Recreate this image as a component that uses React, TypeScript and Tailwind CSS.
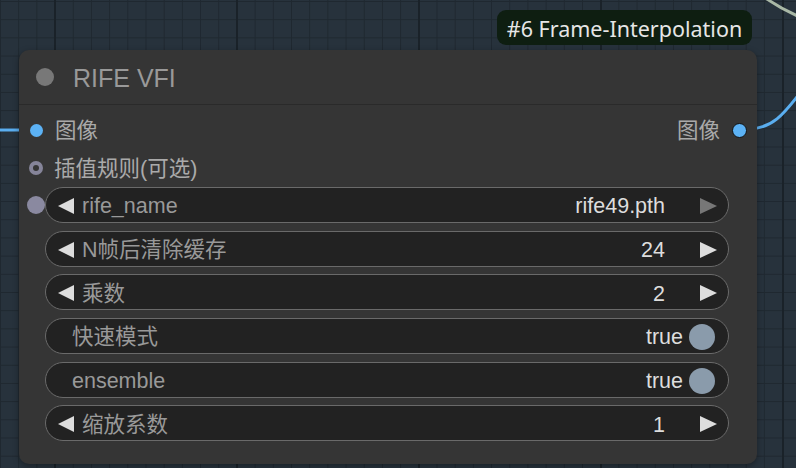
import React from "react";

const LATIN = "font-['Liberation_Sans','Noto_Sans_CJK_SC',sans-serif]";

type Widget =
  | { kind: "combo"; label: string; value: string; dimRight?: boolean; socket?: boolean }
  | { kind: "number"; label: string; value: string }
  | { kind: "toggle"; label: string; value: string };

const widgets: Widget[] = [
  { kind: "combo", label: "rife_name", value: "rife49.pth", dimRight: true, socket: true },
  { kind: "number", label: "N帧后清除缓存", value: "24" },
  { kind: "number", label: "乘数", value: "2" },
  { kind: "toggle", label: "快速模式", value: "true" },
  { kind: "toggle", label: "ensemble", value: "true" },
  { kind: "number", label: "缩放系数", value: "1" },
];

function ArrowLeft({ dim }: { dim?: boolean }) {
  return (
    <svg width="18" height="18" viewBox="0 0 18 18" className="shrink-0">
      <polygon points="17,1 17,17 1,9" fill={dim ? "#777" : "#ddd"} />
    </svg>
  );
}

function ArrowRight({ dim }: { dim?: boolean }) {
  return (
    <svg width="19" height="18" viewBox="0 0 19 18" className="shrink-0">
      <polygon points="1,1 1,17 18,9" fill={dim ? "#777" : "#ddd"} />
    </svg>
  );
}

function WidgetRow({ w }: { w: Widget }) {
  return (
    <div className="relative h-[36px]">
      {w.kind === "combo" && w.socket && (
        <div className="absolute left-[-18px] top-[9px] h-[18px] w-[18px] rounded-full bg-[#8a89a0]" />
      )}
      <div className="flex h-full items-center rounded-full border-[1.5px] border-[#6a6a6a] bg-[#222222]">
        {w.kind === "toggle" ? (
          <>
            <span className="ml-[26px] flex-1 pt-[4px] text-[#999]">{w.label}</span>
            <span className="pt-[4px] text-[#ddd]">{w.value}</span>
            <span className="ml-[6px] mr-[13px] mt-[2px] h-[26px] w-[26px] rounded-full bg-[#8a9bab]" />
          </>
        ) : (
          <>
            <span className="ml-[11px] mt-[2px]">
              <ArrowLeft />
            </span>
            <span className="ml-[7px] flex-1 pt-[4px] text-[#999]">{w.label}</span>
            <span className="pt-[4px] text-[#ddd]">{w.value}</span>
            <span className="ml-[34px] mr-[10px] mt-[2px]">
              <ArrowRight dim={w.kind === "combo" && w.dimRight} />
            </span>
          </>
        )}
      </div>
    </div>
  );
}

export default function App() {
  return (
    <div
      className={`relative h-[468px] w-[796px] overflow-hidden bg-[#27323c] ${LATIN} text-[21.5px] leading-none`}
    >
      {/* canvas grid */}
      <div className="absolute inset-0 bg-[linear-gradient(to_right,#1f2830_1px,transparent_1px),linear-gradient(to_bottom,#1f2830_1px,transparent_1px)] bg-[size:18.2px_18.2px] bg-[position:0px_1px]" />
      <div className="absolute inset-0 bg-[linear-gradient(to_right,#1a2229_2px,transparent_2px)] bg-[size:182px_100%] bg-[position:54px_0px]" />

      {/* links */}
      <svg className="absolute inset-0" width="796" height="468">
        <line x1="0" y1="130" x2="22" y2="130" stroke="#5aaef0" strokeWidth="3" />
        <path d="M748 129 C772 129 784 114 800 93" stroke="#5aaef0" strokeWidth="3" fill="none" />
        <path d="M764 -3 Q781 9 800 17" stroke="#a9b8a6" strokeWidth="3" fill="none" />
      </svg>

      {/* badge */}
      <div className="absolute left-[497px] top-[10px] flex h-[35px] w-[255px] items-center justify-center rounded-[9px] bg-[#0e1e11] pt-[2px] font-['Noto_Sans',sans-serif] text-[21.5px] text-[#e6e6e6]">
        #6 Frame-Interpolation
      </div>

      {/* node */}
      <div className="absolute left-[19px] top-[50px] h-[414px] w-[738px] rounded-[10px] bg-[#353535] shadow-[0_2px_6px_rgba(0,0,0,0.35)]">
        <div className="flex h-[55px] items-center border-b-[1.5px] border-[#2a2a2a]">
          <span className="ml-[17px] h-[18px] w-[18px] rounded-full bg-[#787878]" />
          <span className="ml-[19px] pt-[2px] text-[25px] text-[#999]">RIFE VFI</span>
        </div>

        <div className="pt-[6px]">
          <div className="flex h-[38px] items-center">
            <span className="ml-[11px] h-[13px] w-[13px] rounded-full bg-[#5cb2f5]" />
            <span className="ml-[12px] flex-1 pt-[3px] text-[#aaa]">图像</span>
            <span className="pt-[3px] text-[#aaa]">图像</span>
            <span className="ml-[12px] mr-[10px] h-[15px] w-[15px] rounded-full border-[1.5px] border-[#111] bg-[#5cb2f5]" />
          </div>
          <div className="flex h-[38px] items-center">
            <span className="ml-[10px] flex h-[14px] w-[14px] items-center justify-center rounded-full bg-[#858499]">
              <span className="h-[6px] w-[6px] rounded-full bg-[#353535]" />
            </span>
            <span className="ml-[11px] pt-[3px] text-[#aaa]">插值规则(可选)</span>
          </div>

          <div className="ml-[26px] mr-[28px] flex flex-col gap-[7.7px]">
            {widgets.map((w) => (
              <WidgetRow key={w.label} w={w} />
            ))}
          </div>
        </div>
      </div>
    </div>
  );
}
